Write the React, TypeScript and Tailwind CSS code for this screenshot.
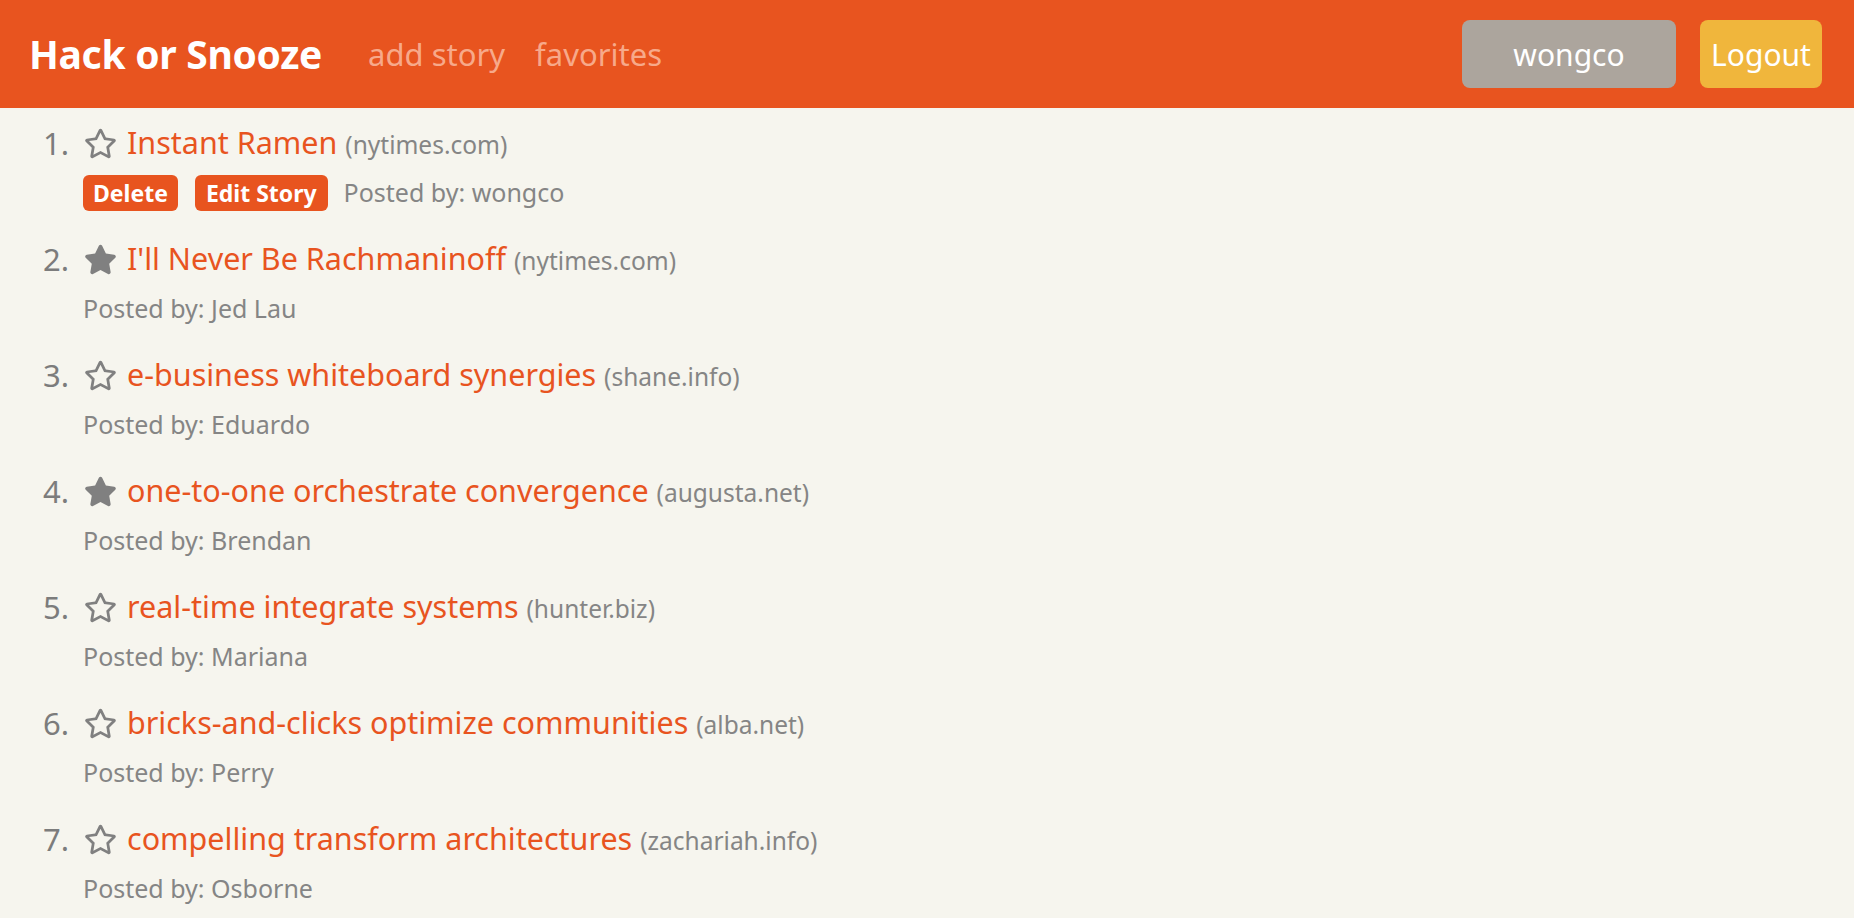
import { FaRegStar, FaStar } from "react-icons/fa";

const stories = [
  { title: "Instant Ramen", host: "nytimes.com", by: "wongco", fav: false, mine: true },
  { title: "I'll Never Be Rachmaninoff", host: "nytimes.com", by: "Jed Lau", fav: true, mine: false },
  { title: "e-business whiteboard synergies", host: "shane.info", by: "Eduardo", fav: false, mine: false },
  { title: "one-to-one orchestrate convergence", host: "augusta.net", by: "Brendan", fav: true, mine: false },
  { title: "real-time integrate systems", host: "hunter.biz", by: "Mariana", fav: false, mine: false },
  { title: "bricks-and-clicks optimize communities", host: "alba.net", by: "Perry", fav: false, mine: false },
  { title: "compelling transform architectures", host: "zachariah.info", by: "Osborne", fav: false, mine: false },
];

function Nav() {
  return (
    <nav className="h-[108px] bg-[#e8541f] flex items-center pl-[29px] pr-[32px]">
      <a className="text-white font-bold text-[39px] tracking-[-0.3px] mr-[46px]">Hack or Snooze</a>
      <div className="flex items-center gap-[30px] text-[31px] text-[#f7a98a]">
        <a>add story</a>
        <a>favorites</a>
      </div>
      <div className="ml-auto flex items-center gap-[24px]">
        <button className="w-[214px] h-[68px] rounded-[8px] bg-[#aca59d] text-white text-[30px]">
          wongco
        </button>
        <button className="w-[122px] h-[68px] rounded-[8px] bg-[#f0b63c] text-white text-[30px]">
          Logout
        </button>
      </div>
    </nav>
  );
}

export default function App() {
  return (
    <div
      className="min-h-screen bg-[#f6f5ee]"
      style={{ fontFamily: '"Noto Sans", "Open Sans", sans-serif' }}
    >
      <Nav />
      <ol>
        {stories.map((s, i) => (
          <li key={s.title} className="pt-[15px] pb-[13px] pl-[43px]">
            <div className="h-[40px] flex items-center">
              <span className="w-[41px] text-[31px] text-[#7c7c7c]">{i + 1}.</span>
              <span className="text-[#808080] mr-[10px]">
                {s.fav ? <FaStar size={33} /> : <FaRegStar size={33} />}
              </span>
              <a className="text-[30.5px] text-[#e8541f] leading-[40px]">
                {s.title}{" "}
                <small className="text-[24.5px] text-[#858585]">({s.host})</small>
              </a>
            </div>
            <div className="mt-[12px] h-[36px] flex items-center pl-[40px] text-[25px] text-[#858585]">
              {s.mine && (
                <>
                  <button className="h-[36px] px-[10px] rounded-[6px] bg-[#e8541f] text-white font-bold text-[23px] mr-[17px]">
                    Delete
                  </button>
                  <button className="h-[36px] px-[11px] rounded-[6px] bg-[#e8541f] text-white font-bold text-[23px] mr-[16px]">
                    Edit Story
                  </button>
                </>
              )}
              <span>Posted by: {s.by}</span>
            </div>
          </li>
        ))}
      </ol>
    </div>
  );
}
